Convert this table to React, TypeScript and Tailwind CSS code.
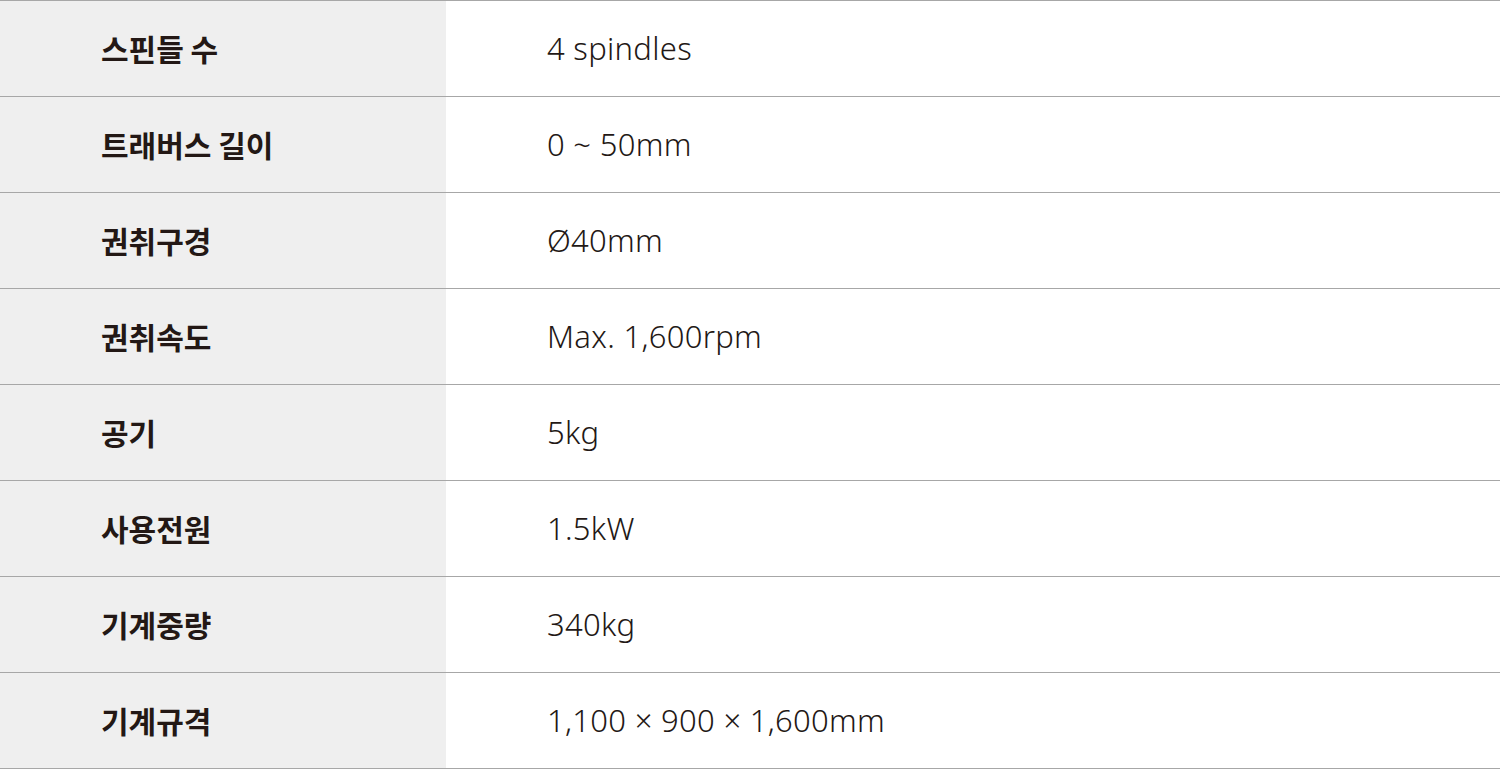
const specs = [
  { label: "스핀들 수", value: "4 spindles" },
  { label: "트래버스 길이", value: "0 ~ 50mm" },
  { label: "권취구경", value: "Ø40mm" },
  { label: "권취속도", value: "Max. 1,600rpm" },
  { label: "공기", value: "5kg" },
  { label: "사용전원", value: "1.5kW" },
  { label: "기계중량", value: "340kg" },
  { label: "기계규격", value: "1,100 × 900 × 1,600mm" },
];

export default function App() {
  return (
    <div className="w-[1500px] h-[770px] bg-white text-[#231815]">
      <div className="border-t border-[#a7a7a7]">
        {specs.map((row) => (
          <div key={row.label} className="flex h-[96px] border-b border-[#a7a7a7]">
            <div className="w-[446px] bg-[#efefef] flex items-center pl-[101px] font-['Noto_Sans_CJK_KR',sans-serif] text-[30px] font-bold">
              {row.label}
            </div>
            <div className="flex-1 flex items-center pl-[101px] font-['Noto_Sans','Noto_Sans_CJK_KR',sans-serif] text-[31px] font-light tracking-[0.3px]">
              {row.value}
            </div>
          </div>
        ))}
      </div>
    </div>
  );
}
